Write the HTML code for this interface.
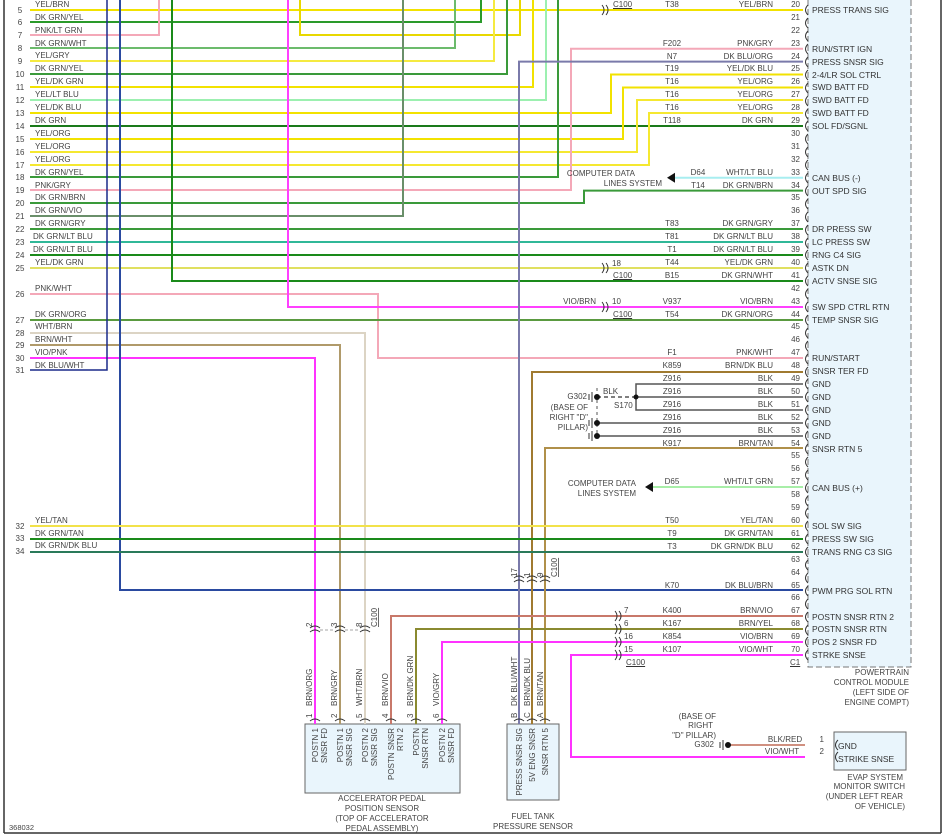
<!DOCTYPE html>
<html><head><meta charset="utf-8"><style>
html,body{margin:0;padding:0;background:#fff}
svg{display:block}
text{font-family:"Liberation Sans",sans-serif;font-size:8px;fill:#444}
.m{font-size:8.5px;fill:#333}
.e{text-anchor:end}
.c{text-anchor:middle}
</style></head><body>
<svg width="946" height="838" viewBox="0 0 946 838" xmlns="http://www.w3.org/2000/svg">
<rect width="946" height="838" fill="#fff"/>
<line x1="4" y1="0" x2="4" y2="833" stroke="#333" stroke-width="1.5"/>
<line x1="941" y1="0" x2="941" y2="833" stroke="#333" stroke-width="1.5"/>
<line x1="4" y1="833" x2="941" y2="833" stroke="#333" stroke-width="1.5"/>
<text x="9" y="830" style="font-size:7.5px">368032</text>
<rect x="808" y="-5" width="103" height="672" fill="#e9f5fc" stroke="#777" stroke-dasharray="6,3"/>
<rect x="834" y="732" width="72" height="38" fill="#e9f5fc" stroke="#666"/>
<rect x="305" y="724" width="155" height="69" fill="#e9f5fc" stroke="#666"/>
<rect x="507" y="724" width="52" height="76" fill="#e9f5fc" stroke="#666"/>

<g fill="none" stroke-width="2">
<path d="M30,10H803" stroke="#f2e200"/>
<path d="M30,22H481V0" stroke="#2a9a2a"/>
<path d="M30,35H159V0" stroke="#f4a8b8"/>
<path d="M300,0V35H520V0" stroke="#e8d800"/>
<path d="M30,48H455V0" stroke="#6cbb6c"/>
<path d="M30,61H494V0" stroke="#f5ea40"/>
<path d="M30,74H507V0" stroke="#3a9a3a"/>
<path d="M30,87H533V0" stroke="#f2e200"/>
<path d="M30,100H546V0" stroke="#9cf0b0"/>
<path d="M30,113H611V74.5H803" stroke="#f2e200"/>
<path d="M30,126H803" stroke="#1a7a1a"/>
<path d="M30,139H623V87.5H803" stroke="#f2e200"/>
<path d="M30,152H637V100H803" stroke="#f5e830"/>
<path d="M30,165H649V113H803" stroke="#f5e830"/>
<path d="M30,177H558V0" stroke="#3a9a3a"/>
<path d="M30,190H571V48.7H803" stroke="#f4a8b8"/>
<path d="M30,203H584V190.6H803" stroke="#3a9a3a"/>
<path d="M30,216H403V0" stroke="#6a8f6a"/>
<path d="M30,229H803" stroke="#3a9a3a"/>
<path d="M30,242H803" stroke="#30b898"/>
<path d="M30,255H803" stroke="#1a8a1a"/>
<path d="M30,268H803" stroke="#e0e060"/>
<path d="M172,0V281H803" stroke="#1a8a1a"/>
<path d="M30,294H378V358H803" stroke="#f4a8b8"/>
<path d="M288,0V307H803" stroke="#ff40ff"/>
<path d="M30,320H803" stroke="#5a9a40"/>
<path d="M30,333H365V724" stroke="#dcd4c4"/>
<path d="M30,345H340V724" stroke="#b09a6a"/>
<path d="M30,358H315V724" stroke="#ff33ff"/>
<path d="M30,370H107V0" stroke="#1a2a8a" stroke-width="1.5"/>
<path d="M120,0V590H803" stroke="#2a4aa0"/>
<path d="M803,61.6H519V724" stroke="#7a7aaa"/>
<path d="M672,177.7H803" stroke="#a8eef0"/>
<path d="M803,372H532V724" stroke="#a07a30"/>
<path d="M803,384H636V410H803M636,397H803" stroke="#555" stroke-width="1.5"/>
<path d="M597,397H636" stroke="#333" stroke-width="1.2" stroke-dasharray="4,3"/>
<path d="M597,423H803M597,436H803" stroke="#555" stroke-width="1.5"/>
<path d="M597,388V436" stroke="#555" stroke-width="1" stroke-dasharray="3,3"/>
<path d="M803,448H545V724" stroke="#b0904a"/>
<path d="M650,487H803" stroke="#a8eea8"/>
<path d="M30,526H803" stroke="#f2e24a"/>
<path d="M30,539H803" stroke="#1a8a1a"/>
<path d="M30,552H803" stroke="#2a7a5a"/>
<path d="M803,616H391V724" stroke="#c8786a"/>
<path d="M803,629H416V724" stroke="#8a8a30"/>
<path d="M803,642H442V724" stroke="#ff33ff"/>
<path d="M803,655H571V757H805" stroke="#ff33ff"/>
<path d="M730,745H805" stroke="#d09080"/>
</g>
<path d="M667,177.7l8,-5v10z" fill="#111"/>
<path d="M645,487l8,-5v10z" fill="#111"/>
<circle cx="636" cy="397" r="2.5" fill="#111"/>
<g fill="#111"><circle cx="597" cy="397" r="3"/><circle cx="597" cy="423" r="3"/><circle cx="597" cy="436" r="3"/><circle cx="728" cy="745" r="3"/></g>
<g stroke="#333" stroke-width="1"><path d="M592,392v10M589,394v6M723,740v10M720,742v6M592,418v10M589,420v6M592,431v10M589,433v6"/></g>

<g fill="none" stroke="#333" stroke-width="1">
<path d="M808,5q-5,5 0,10M808,18q-5,5 0,10M808,31q-5,5 0,10M808,44q-5,5 0,10M808,57q-5,5 0,10M808,70q-5,5 0,10M808,83q-5,5 0,10M808,96q-5,5 0,10M808,109q-5,5 0,10M808,121q-5,5 0,10M808,134q-5,5 0,10M808,147q-5,5 0,10M808,160q-5,5 0,10M808,173q-5,5 0,10M808,186q-5,5 0,10M808,199q-5,5 0,10M808,212q-5,5 0,10M808,225q-5,5 0,10M808,238q-5,5 0,10M808,250q-5,5 0,10M808,263q-5,5 0,10M808,276q-5,5 0,10M808,289q-5,5 0,10M808,302q-5,5 0,10M808,315q-5,5 0,10M808,328q-5,5 0,10M808,341q-5,5 0,10M808,354q-5,5 0,10M808,367q-5,5 0,10M808,379q-5,5 0,10M808,392q-5,5 0,10M808,405q-5,5 0,10M808,418q-5,5 0,10M808,431q-5,5 0,10M808,444q-5,5 0,10M808,457q-5,5 0,10M808,470q-5,5 0,10M808,483q-5,5 0,10M808,496q-5,5 0,10M808,508q-5,5 0,10M808,521q-5,5 0,10M808,534q-5,5 0,10M808,547q-5,5 0,10M808,560q-5,5 0,10M808,573q-5,5 0,10M808,586q-5,5 0,10M808,599q-5,5 0,10M808,612q-5,5 0,10M808,625q-5,5 0,10M808,637q-5,5 0,10M808,650q-5,5 0,10"/>
<path d="M838,740q-5,5 0,10M838,752q-5,5 0,10"/>
<path d="M602,5q4,5 0,10M606,5q4,5 0,10M602,263q4,5 0,10M606,263q4,5 0,10M602,302q4,5 0,10M606,302q4,5 0,10M615,611q4,5 0,10M619,611q4,5 0,10M615,624q4,5 0,10M619,624q4,5 0,10M615,637q4,5 0,10M619,637q4,5 0,10M615,650q4,5 0,10M619,650q4,5 0,10"/>
<path d="M310,628q5,-4 10,0M310,632q5,-4 10,0M335,628q5,-4 10,0M335,632q5,-4 10,0M360,628q5,-4 10,0M360,632q5,-4 10,0"/>
<path d="M514,578q5,-4 10,0M514,582q5,-4 10,0M527,578q5,-4 10,0M527,582q5,-4 10,0M540,578q5,-4 10,0M540,582q5,-4 10,0"/>
<path d="M310,721q5,-4 10,0M335,721q5,-4 10,0M360,721q5,-4 10,0M386,721q5,-4 10,0M411,721q5,-4 10,0M437,721q5,-4 10,0M514,721q5,-4 10,0M527,721q5,-4 10,0M540,721q5,-4 10,0"/>
</g>
<path d="M320,630H335M345,630H360" stroke="#888" stroke-dasharray="3,2" stroke-width="0.8"/>

<g class="c">
<text x="20" y="13" class="c">5</text><text x="20" y="25" class="c">6</text><text x="20" y="38" class="c">7</text><text x="20" y="51" class="c">8</text><text x="20" y="64" class="c">9</text><text x="20" y="77" class="c">10</text><text x="20" y="90" class="c">11</text><text x="20" y="103" class="c">12</text><text x="20" y="116" class="c">13</text><text x="20" y="129" class="c">14</text><text x="20" y="142" class="c">15</text><text x="20" y="155" class="c">16</text><text x="20" y="168" class="c">17</text><text x="20" y="180" class="c">18</text><text x="20" y="193" class="c">19</text><text x="20" y="206" class="c">20</text><text x="20" y="219" class="c">21</text><text x="20" y="232" class="c">22</text><text x="20" y="245" class="c">23</text><text x="20" y="258" class="c">24</text><text x="20" y="271" class="c">25</text><text x="20" y="297" class="c">26</text><text x="20" y="323" class="c">27</text><text x="20" y="336" class="c">28</text><text x="20" y="348" class="c">29</text><text x="20" y="361" class="c">30</text><text x="20" y="373" class="c">31</text><text x="20" y="529" class="c">32</text><text x="20" y="541" class="c">33</text><text x="20" y="554" class="c">34</text>
</g>
<g>
<text x="35" y="7">YEL/BRN</text><text x="35" y="20">DK GRN/YEL</text><text x="35" y="33">PNK/LT GRN</text><text x="35" y="46">DK GRN/WHT</text><text x="35" y="58">YEL/GRY</text><text x="35" y="71">DK GRN/YEL</text><text x="35" y="84">YEL/DK GRN</text><text x="35" y="97">YEL/LT BLU</text><text x="35" y="110">YEL/DK BLU</text><text x="35" y="123">DK GRN</text><text x="35" y="136">YEL/ORG</text><text x="35" y="149">YEL/ORG</text><text x="35" y="162">YEL/ORG</text><text x="35" y="175">DK GRN/YEL</text><text x="35" y="188">PNK/GRY</text><text x="35" y="200">DK GRN/BRN</text><text x="35" y="213">DK GRN/VIO</text><text x="35" y="226">DK GRN/GRY</text><text x="33" y="239">DK GRN/LT BLU</text><text x="33" y="252">DK GRN/LT BLU</text><text x="35" y="265">YEL/DK GRN</text><text x="35" y="291">PNK/WHT</text><text x="35" y="317">DK GRN/ORG</text><text x="35" y="329">WHT/BRN</text><text x="35" y="342">BRN/WHT</text><text x="35" y="355">VIO/PNK</text><text x="35" y="368">DK BLU/WHT</text><text x="35" y="523">YEL/TAN</text><text x="35" y="536">DK GRN/TAN</text><text x="35" y="548">DK GRN/DK BLU</text>
</g>

<g>
<text x="672" y="7" class="c">T38</text><text x="773" y="7" class="e">YEL/BRN</text>
<text x="672" y="46" class="c">F202</text><text x="773" y="46" class="e">PNK/GRY</text>
<text x="672" y="59" class="c">N7</text><text x="773" y="59" class="e">DK BLU/ORG</text>
<text x="672" y="71" class="c">T19</text><text x="773" y="71" class="e">YEL/DK BLU</text>
<text x="672" y="84" class="c">T16</text><text x="773" y="84" class="e">YEL/ORG</text>
<text x="672" y="97" class="c">T16</text><text x="773" y="97" class="e">YEL/ORG</text>
<text x="672" y="110" class="c">T16</text><text x="773" y="110" class="e">YEL/ORG</text>
<text x="672" y="123" class="c">T118</text><text x="773" y="123" class="e">DK GRN</text>
<text x="698" y="175" class="c">D64</text><text x="773" y="175" class="e">WHT/LT BLU</text>
<text x="698" y="188" class="c">T14</text><text x="773" y="188" class="e">DK GRN/BRN</text>
<text x="635" y="176" class="e">COMPUTER DATA</text><text x="662" y="186" class="e">LINES SYSTEM</text>
<text x="672" y="226" class="c">T83</text><text x="773" y="226" class="e">DK GRN/GRY</text>
<text x="672" y="239" class="c">T81</text><text x="773" y="239" class="e">DK GRN/LT BLU</text>
<text x="672" y="252" class="c">T1</text><text x="773" y="252" class="e">DK GRN/LT BLU</text>
<text x="672" y="265" class="c">T44</text><text x="773" y="265" class="e">YEL/DK GRN</text>
<text x="672" y="278" class="c">B15</text><text x="773" y="278" class="e">DK GRN/WHT</text>
<text x="672" y="304" class="c">V937</text><text x="773" y="304" class="e">VIO/BRN</text>
<text x="672" y="317" class="c">T54</text><text x="773" y="317" class="e">DK GRN/ORG</text>
<text x="672" y="355" class="c">F1</text><text x="773" y="355" class="e">PNK/WHT</text>
<text x="672" y="368" class="c">K859</text><text x="773" y="368" class="e">BRN/DK BLU</text>
<text x="672" y="381" class="c">Z916</text><text x="773" y="381" class="e">BLK</text>
<text x="672" y="394" class="c">Z916</text><text x="773" y="394" class="e">BLK</text>
<text x="672" y="407" class="c">Z916</text><text x="773" y="407" class="e">BLK</text>
<text x="672" y="420" class="c">Z916</text><text x="773" y="420" class="e">BLK</text>
<text x="672" y="433" class="c">Z916</text><text x="773" y="433" class="e">BLK</text>
<text x="672" y="446" class="c">K917</text><text x="773" y="446" class="e">BRN/TAN</text>
<text x="672" y="484" class="c">D65</text><text x="773" y="484" class="e">WHT/LT GRN</text>
<text x="636" y="486" class="e">COMPUTER DATA</text><text x="636" y="496" class="e">LINES SYSTEM</text>
<text x="672" y="523" class="c">T50</text><text x="773" y="523" class="e">YEL/TAN</text>
<text x="672" y="536" class="c">T9</text><text x="773" y="536" class="e">DK GRN/TAN</text>
<text x="672" y="549" class="c">T3</text><text x="773" y="549" class="e">DK GRN/DK BLU</text>
<text x="672" y="588" class="c">K70</text><text x="773" y="588" class="e">DK BLU/BRN</text>
<text x="672" y="613" class="c">K400</text><text x="773" y="613" class="e">BRN/VIO</text>
<text x="672" y="626" class="c">K167</text><text x="773" y="626" class="e">BRN/YEL</text>
<text x="672" y="639" class="c">K854</text><text x="773" y="639" class="e">VIO/BRN</text>
<text x="672" y="652" class="c">K107</text><text x="773" y="652" class="e">VIO/WHT</text>
<text x="587" y="399" class="e">G302</text><text x="603" y="394">BLK</text><text x="614" y="408">S170</text>
<text x="588" y="410" class="e">(BASE OF</text><text x="588" y="420" class="e">RIGHT "D"</text><text x="588" y="430" class="e">PILLAR)</text>
<text x="612" y="266">18</text><text x="612" y="304">10</text><text x="596" y="304" class="e">VIO/BRN</text>
<text x="624" y="613">7</text><text x="624" y="626">6</text><text x="624" y="639">16</text><text x="624" y="652">15</text>
</g>
<g style="text-decoration:underline">
<text x="613" y="7">C100</text><text x="613" y="278">C100</text><text x="613" y="317">C100</text><text x="626" y="665">C100</text><text x="790" y="665">C1</text>
</g>
<g class="e">
<text x="800" y="7" class="e">20</text><text x="800" y="20" class="e">21</text><text x="800" y="33" class="e">22</text><text x="800" y="46" class="e">23</text><text x="800" y="59" class="e">24</text><text x="800" y="71" class="e">25</text><text x="800" y="84" class="e">26</text><text x="800" y="97" class="e">27</text><text x="800" y="110" class="e">28</text><text x="800" y="123" class="e">29</text><text x="800" y="136" class="e">30</text><text x="800" y="149" class="e">31</text><text x="800" y="162" class="e">32</text><text x="800" y="175" class="e">33</text><text x="800" y="188" class="e">34</text><text x="800" y="200" class="e">35</text><text x="800" y="213" class="e">36</text><text x="800" y="226" class="e">37</text><text x="800" y="239" class="e">38</text><text x="800" y="252" class="e">39</text><text x="800" y="265" class="e">40</text><text x="800" y="278" class="e">41</text><text x="800" y="291" class="e">42</text><text x="800" y="304" class="e">43</text><text x="800" y="317" class="e">44</text><text x="800" y="329" class="e">45</text><text x="800" y="342" class="e">46</text><text x="800" y="355" class="e">47</text><text x="800" y="368" class="e">48</text><text x="800" y="381" class="e">49</text><text x="800" y="394" class="e">50</text><text x="800" y="407" class="e">51</text><text x="800" y="420" class="e">52</text><text x="800" y="433" class="e">53</text><text x="800" y="446" class="e">54</text><text x="800" y="458" class="e">55</text><text x="800" y="471" class="e">56</text><text x="800" y="484" class="e">57</text><text x="800" y="497" class="e">58</text><text x="800" y="510" class="e">59</text><text x="800" y="523" class="e">60</text><text x="800" y="536" class="e">61</text><text x="800" y="549" class="e">62</text><text x="800" y="562" class="e">63</text><text x="800" y="575" class="e">64</text><text x="800" y="588" class="e">65</text><text x="800" y="600" class="e">66</text><text x="800" y="613" class="e">67</text><text x="800" y="626" class="e">68</text><text x="800" y="639" class="e">69</text><text x="800" y="652" class="e">70</text>
</g>
<g class="m">
<text class="m" x="812" y="13">PRESS TRANS SIG</text>
<text class="m" x="812" y="52">RUN/STRT IGN</text>
<text class="m" x="812" y="65">PRESS SNSR SIG</text>
<text class="m" x="812" y="78">2-4/LR SOL CTRL</text>
<text class="m" x="812" y="90">SWD BATT FD</text>
<text class="m" x="812" y="103">SWD BATT FD</text>
<text class="m" x="812" y="116">SWD BATT FD</text>
<text class="m" x="812" y="129">SOL FD/SGNL</text>
<text class="m" x="812" y="181">CAN BUS (-)</text>
<text class="m" x="812" y="194">OUT SPD SIG</text>
<text class="m" x="812" y="232">DR PRESS SW</text>
<text class="m" x="812" y="245">LC PRESS SW</text>
<text class="m" x="812" y="258">RNG C4 SIG</text>
<text class="m" x="812" y="271">ASTK DN</text>
<text class="m" x="812" y="284">ACTV SNSE SIG</text>
<text class="m" x="812" y="310">SW SPD CTRL RTN</text>
<text class="m" x="812" y="323">TEMP SNSR SIG</text>
<text class="m" x="812" y="361">RUN/START</text>
<text class="m" x="812" y="374">SNSR TER FD</text>
<text class="m" x="812" y="387">GND</text>
<text class="m" x="812" y="400">GND</text>
<text class="m" x="812" y="413">GND</text>
<text class="m" x="812" y="426">GND</text>
<text class="m" x="812" y="439">GND</text>
<text class="m" x="812" y="452">SNSR RTN 5</text>
<text class="m" x="812" y="491">CAN BUS (+)</text>
<text class="m" x="812" y="529">SOL SW SIG</text>
<text class="m" x="812" y="542">PRESS SW SIG</text>
<text class="m" x="812" y="555">TRANS RNG C3 SIG</text>
<text class="m" x="812" y="594">PWM PRG SOL RTN</text>
<text class="m" x="812" y="620">POSTN SNSR RTN 2</text>
<text class="m" x="812" y="632">POSTN SNSR RTN</text>
<text class="m" x="812" y="645">POS 2 SNSR FD</text>
<text class="m" x="812" y="658">STRKE SNSE</text>
</g>
<g class="e">
<text class="e" x="909" y="675">POWERTRAIN</text><text class="e" x="909" y="685">CONTROL MODULE</text><text class="e" x="909" y="695">(LEFT SIDE OF</text><text class="e" x="909" y="705">ENGINE COMPT)</text>
</g>
<text x="716" y="719" class="e">(BASE OF</text><text x="713" y="728" class="e">RIGHT</text><text x="716" y="738" class="e">"D" PILLAR)</text><text x="714" y="747" class="e">G302</text>
<text x="785" y="742" class="c">BLK/RED</text><text x="782" y="754" class="c">VIO/WHT</text>
<text x="824" y="742" class="e">1</text><text x="824" y="754" class="e">2</text>
<text x="838" y="749" class="m">GND</text><text x="838" y="762" class="m">STRIKE SNSE</text>
<text x="903" y="780" class="e">EVAP SYSTEM</text><text x="905" y="789" class="e">MONITOR SWITCH</text><text x="903" y="799" class="e">(UNDER LEFT REAR</text><text x="905" y="809" class="e">OF VEHICLE)</text>
<text x="382" y="801" class="c">ACCELERATOR PEDAL</text><text x="382" y="811" class="c">POSITION SENSOR</text><text x="382" y="821" class="c">(TOP OF ACCELERATOR</text><text x="382" y="831" class="c">PEDAL ASSEMBLY)</text>
<text x="533" y="819" class="c">FUEL TANK</text><text x="533" y="829" class="c">PRESSURE SENSOR</text>
<g style="font-size:7.5px">
<text transform="translate(312,706) rotate(-90)">BRN/ORG</text>
<text transform="translate(337,706) rotate(-90)">BRN/GRY</text>
<text transform="translate(362,706) rotate(-90)">WHT/BRN</text>
<text transform="translate(388,706) rotate(-90)">BRN/VIO</text>
<text transform="translate(413,706) rotate(-90)">BRN/DK GRN</text>
<text transform="translate(439,706) rotate(-90)">VIO/GRY</text>
<text transform="translate(517,706) rotate(-90)">DK BLU/WHT</text>
<text transform="translate(530,706) rotate(-90)">BRN/DK BLU</text>
<text transform="translate(543,706) rotate(-90)">BRN/TAN</text>
<text transform="translate(312,718) rotate(-90)">1</text><text transform="translate(337,718) rotate(-90)">2</text><text transform="translate(362,718) rotate(-90)">5</text><text transform="translate(388,718) rotate(-90)">4</text><text transform="translate(413,718) rotate(-90)">3</text><text transform="translate(439,718) rotate(-90)">6</text>
<text transform="translate(517,718) rotate(-90)">B</text><text transform="translate(530,718) rotate(-90)">C</text><text transform="translate(543,718) rotate(-90)">A</text>
<text transform="translate(312,627) rotate(-90)">2</text><text transform="translate(337,627) rotate(-90)">3</text><text transform="translate(362,627) rotate(-90)">8</text>
<text transform="translate(377,627) rotate(-90)" style="text-decoration:underline">C100</text>
<text transform="translate(517,577) rotate(-90)">17</text><text transform="translate(530,577) rotate(-90)">1</text><text transform="translate(543,577) rotate(-90)">9</text>
<text transform="translate(557,577) rotate(-90)" style="text-decoration:underline">C100</text>
<text transform="translate(318,728) rotate(-90)" text-anchor="end">POSTN 1</text><text transform="translate(327,728) rotate(-90)" text-anchor="end">SNSR FD</text>
<text transform="translate(343,728) rotate(-90)" text-anchor="end">POSTN 1</text><text transform="translate(352,728) rotate(-90)" text-anchor="end">SNSR SIG</text>
<text transform="translate(368,728) rotate(-90)" text-anchor="end">POSTN 2</text><text transform="translate(377,728) rotate(-90)" text-anchor="end">SNSR SIG</text>
<text transform="translate(394,728) rotate(-90)" text-anchor="end">POSTN SNSR</text><text transform="translate(403,728) rotate(-90)" text-anchor="end">RTN 2</text>
<text transform="translate(419,728) rotate(-90)" text-anchor="end">POSTN</text><text transform="translate(428,728) rotate(-90)" text-anchor="end">SNSR RTN</text>
<text transform="translate(445,728) rotate(-90)" text-anchor="end">POSTN 2</text><text transform="translate(454,728) rotate(-90)" text-anchor="end">SNSR FD</text>
<text transform="translate(522,728) rotate(-90)" text-anchor="end">PRESS SNSR SIG</text>
<text transform="translate(535,728) rotate(-90)" text-anchor="end">5V ENG SNSR</text>
<text transform="translate(548,728) rotate(-90)" text-anchor="end">SNSR RTN 5</text>
</g>
</svg>
</body></html>
